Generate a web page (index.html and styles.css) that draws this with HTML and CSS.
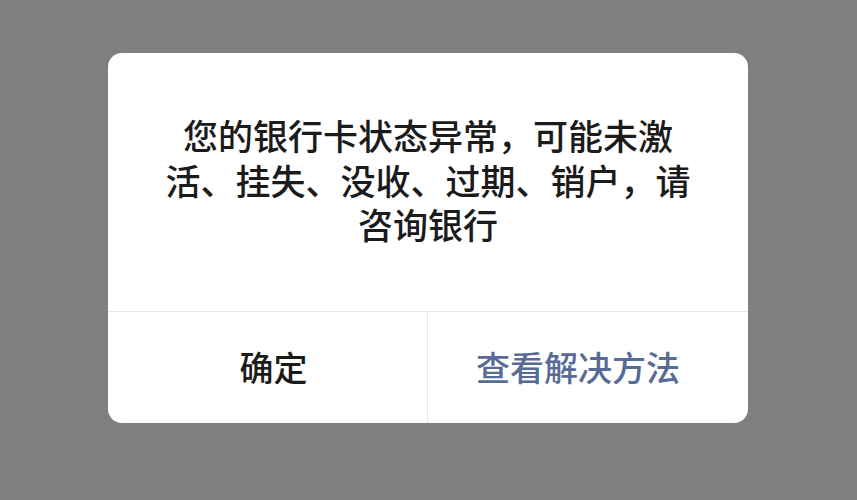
FILE: index.html
```html
<!DOCTYPE html>
<html lang="zh-CN">
<head>
<meta charset="utf-8">
<link rel="stylesheet" href="styles.css">
</head>
<body>
<div class="dialog">
  <div class="message">您的银行卡状态异常，可能未激活、挂失、没收、过期、销户，请咨询银行</div>
  <div class="actions">
    <div class="btn btn-primary">确定</div>
    <div class="btn btn-link">查看解决方法</div>
  </div>
</div>
</body>
</html>
```
FILE: styles.css
```css
html, body {
  margin: 0;
  padding: 0;
  background: #7f7f7f;
  width: 857px;
  height: 500px;
  overflow: hidden;
}
body {
  font-family: "Noto Sans CJK SC", "Noto Sans", sans-serif;
}
.dialog {
  margin: 53px 0 0 108px;
  width: 640px;
  height: 370px;
  background: #ffffff;
  border-radius: 14px;
  display: flex;
  flex-direction: column;
  overflow: hidden;
}
.message {
  box-sizing: border-box;
  height: 258px;
  padding: 60px 50px 0;
  text-align: center;
  font-size: 35px;
  line-height: 44.5px;
  font-weight: 500;
  color: #1b1b1b;
}
.actions {
  flex: 1;
  display: grid;
  grid-template-columns: 1fr 1fr;
  border-top: 1px solid #e8e8e8;
}
.btn {
  box-sizing: border-box;
  display: flex;
  align-items: center;
  justify-content: center;
  font-size: 34px;
  font-weight: 500;
  padding-bottom: 2px;
}
.btn-primary {
  color: #1b1b1b;
  border-right: 1px solid #e8e8e8;
  padding-left: 12px;
}
.btn-link {
  color: #576b95;
  padding-right: 20px;
}
```
